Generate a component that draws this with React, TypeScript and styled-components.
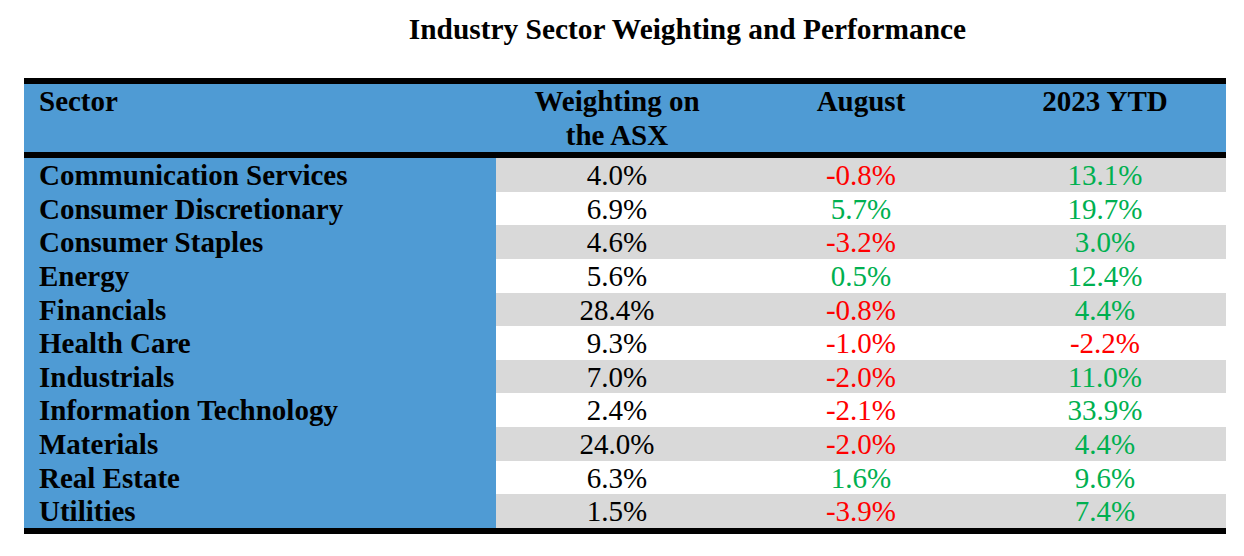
import styled, { createGlobalStyle } from 'styled-components'

const GlobalStyle = createGlobalStyle`
  html, body {
    margin: 0;
    padding: 0;
    background: #ffffff;
  }
  body {
    font-family: "Liberation Serif", "Times New Roman", serif;
    color: #000000;
  }
`

type Tone = 'neg' | 'pos' | 'plain'

interface SectorRow {
  name: string
  weight: string
  august: string
  ytd: string
}

const rows: SectorRow[] = [
  { name: 'Communication Services', weight: '4.0%', august: '-0.8%', ytd: '13.1%' },
  { name: 'Consumer Discretionary', weight: '6.9%', august: '5.7%', ytd: '19.7%' },
  { name: 'Consumer Staples', weight: '4.6%', august: '-3.2%', ytd: '3.0%' },
  { name: 'Energy', weight: '5.6%', august: '0.5%', ytd: '12.4%' },
  { name: 'Financials', weight: '28.4%', august: '-0.8%', ytd: '4.4%' },
  { name: 'Health Care', weight: '9.3%', august: '-1.0%', ytd: '-2.2%' },
  { name: 'Industrials', weight: '7.0%', august: '-2.0%', ytd: '11.0%' },
  { name: 'Information Technology', weight: '2.4%', august: '-2.1%', ytd: '33.9%' },
  { name: 'Materials', weight: '24.0%', august: '-2.0%', ytd: '4.4%' },
  { name: 'Real Estate', weight: '6.3%', august: '1.6%', ytd: '9.6%' },
  { name: 'Utilities', weight: '1.5%', august: '-3.9%', ytd: '7.4%' },
]

// negative numbers red, everything else green
const toneOf = (v: string): Tone => (v.startsWith('-') ? 'neg' : 'pos')

export default function App() {
  return (
    <>
      <GlobalStyle />
      <Page>
        <Title>Industry Sector Weighting and Performance</Title>
        <Table>
          <HeaderRow>
            <HeadCell>Sector</HeadCell>
            <HeadCell $center>
              Weighting on
              <br />
              the ASX
            </HeadCell>
            <HeadCell $center>August</HeadCell>
            <HeadCell $center>2023 YTD</HeadCell>
          </HeaderRow>
          {rows.map((r, i) => (
            <Row key={r.name}>
              <NameCell>{r.name}</NameCell>
              <ValueCell $shaded={i % 2 === 0} $tone="plain">{r.weight}</ValueCell>
              <ValueCell $shaded={i % 2 === 0} $tone={toneOf(r.august)}>{r.august}</ValueCell>
              <ValueCell $shaded={i % 2 === 0} $tone={toneOf(r.ytd)}>{r.ytd}</ValueCell>
            </Row>
          ))}
        </Table>
      </Page>
    </>
  )
}

const blue = '#4f9bd4'
const grey = '#d9d9d9'
const columns = '472px 242px 246px 242px'

const toneColors: Record<Tone, string> = {
  neg: '#ff0000',
  pos: '#00b050',
  plain: '#000000',
}

const Page = styled.div`
  width: 1244px;
  padding-top: 12px;
`

const Title = styled.h1`
  margin: 0 0 32px;
  padding-left: 131px;
  font-size: 29.4px;
  line-height: 34px;
  font-weight: bold;
  text-align: center;
`

const Table = styled.div`
  margin-left: 24px;
  width: 1202px;
  border-top: 6px solid #000000;
  border-bottom: 6px solid #000000;
`

const HeaderRow = styled.div`
  display: grid;
  grid-template-columns: ${columns};
  background: ${blue};
  border-bottom: 6px solid #000000;
  height: 68px;
`

const HeadCell = styled.div<{ $center?: boolean }>`
  font-size: 29px;
  font-weight: bold;
  line-height: 33.6px;
  padding-top: 1px;
  padding-left: ${(p) => (p.$center ? '0' : '15px')};
  text-align: ${(p) => (p.$center ? 'center' : 'left')};
`

const Row = styled.div`
  display: grid;
  grid-template-columns: ${columns};
  height: 33.64px;
`

const NameCell = styled.div`
  background: ${blue};
  font-size: 29px;
  font-weight: bold;
  line-height: 31.64px;
  padding: 2px 0 0 15px;
  white-space: nowrap;
`

const ValueCell = styled.div<{ $shaded: boolean; $tone: Tone }>`
  background: ${(p) => (p.$shaded ? grey : '#ffffff')};
  color: ${(p) => toneColors[p.$tone]};
  font-size: 29px;
  line-height: 31.64px;
  padding-top: 2px;
  text-align: center;
`
